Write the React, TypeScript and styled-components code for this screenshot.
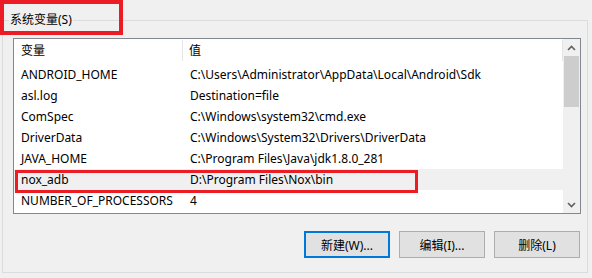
import * as React from "react";
import styled, { createGlobalStyle } from "styled-components";

const GlobalStyle = createGlobalStyle`
  html, body {
    margin: 0;
    padding: 0;
    background: #f0f0f0;
  }
  body {
    font-family: "Noto Sans", "Noto Sans CJK SC", sans-serif;
    font-size: 12px;
    color: #000;
  }
`;

const Page = styled.div`
  position: relative;
  width: 592px;
  height: 278px;
  padding-top: 20px;
  box-sizing: border-box;
  overflow: hidden;
`;

const Group = styled.div`
  margin-left: 2px;
  width: 586px;
  height: 253px;
  box-sizing: border-box;
  border: 1px solid #dcdcdc;
`;

const GroupTitle = styled.div`
  display: inline-block;
  margin: -10px 0 0 6px;
  padding: 0 1px;
  height: 18px;
  line-height: 18px;
  background: #f0f0f0;
  vertical-align: top;
`;

const ListBox = styled.div`
  display: flex;
  margin: 0 0 0 10px;
  width: 568px;
  height: 176px;
  box-sizing: border-box;
  border: 1px solid #828790;
  background: #fff;
`;

const ListBody = styled.div`
  flex: 1;
  display: flex;
  flex-direction: column;
`;

const HeaderRow = styled.div`
  display: flex;
  height: 25px;
  align-items: stretch;
`;

const HeaderCell = styled.div<{ $w?: number }>`
  display: flex;
  align-items: center;
  box-sizing: border-box;
  width: ${(p) => (p.$w ? `${p.$w}px` : "auto")};
  flex: ${(p) => (p.$w ? "none" : "1")};
  padding-left: ${(p) => (p.$w ? 7 : 6)}px;
  padding-bottom: 2px;
  border-right: 1px solid #e5e5e5;
  margin: 1px 0 3px;
`;

const Row = styled.div<{ $selected?: boolean }>`
  display: flex;
  height: 21px;
  align-items: center;
  background: ${(p) => (p.$selected ? "#f0f0f0" : "transparent")};
  white-space: nowrap;
`;

const Cell = styled.div<{ $w?: number }>`
  box-sizing: border-box;
  width: ${(p) => (p.$w ? `${p.$w}px` : "auto")};
  flex: ${(p) => (p.$w ? "none" : "1")};
  padding-left: ${(p) => (p.$w ? 7 : 7)}px;
  overflow: hidden;
`;

const ScrollBar = styled.div`
  width: 17px;
  display: flex;
  flex-direction: column;
  background: #f0f0f0;
`;

const ArrowBtn = styled.div`
  height: 17px;
  display: flex;
  align-items: center;
  justify-content: center;
`;

const Track = styled.div`
  flex: 1;
  padding: 0 1px;
`;

const Thumb = styled.div`
  height: 51px;
  background: #cdcdcd;
`;

const ButtonRow = styled.div`
  display: flex;
  justify-content: flex-end;
  gap: 9px;
  margin: 17px 7px 0 0;
`;

const Button = styled.div<{ $default?: boolean }>`
  width: 86px;
  height: 27px;
  box-sizing: border-box;
  display: flex;
  align-items: center;
  justify-content: center;
  background: #e1e1e1;
  border: ${(p) => (p.$default ? "2px solid #0078d7" : "1px solid #adadad")};
`;

const Mark = styled.div`
  position: absolute;
  box-sizing: border-box;
  border: 3px solid #ec1c24;
  pointer-events: none;
`;

const Chevron = ({ up }: { up?: boolean }) => (
  <svg width="9" height="6" viewBox="0 0 9 6">
    <path
      d={up ? "M1 5 L4.5 1.5 L8 5" : "M1 1 L4.5 4.5 L8 1"}
      fill="none"
      stroke="#606060"
      strokeWidth="1.6"
    />
  </svg>
);

const rows = [
  ["ANDROID_HOME", "C:\\Users\\Administrator\\AppData\\Local\\Android\\Sdk"],
  ["asl.log", "Destination=file"],
  ["ComSpec", "C:\\Windows\\system32\\cmd.exe"],
  ["DriverData", "C:\\Windows\\System32\\Drivers\\DriverData"],
  ["JAVA_HOME", "C:\\Program Files\\Java\\jdk1.8.0_281"],
  ["nox_adb", "D:\\Program Files\\Nox\\bin"],
  ["NUMBER_OF_PROCESSORS", "4"],
];

const App = () => {
  return (
    <Page>
      <GlobalStyle />
      <Group>
        <GroupTitle>系统变量(S)</GroupTitle>
        <ListBox>
          <ListBody>
            <HeaderRow>
              <HeaderCell $w={169}>变量</HeaderCell>
              <HeaderCell>值</HeaderCell>
            </HeaderRow>
            {rows.map(([name, value]) => (
              <Row key={name} $selected={name === "nox_adb"}>
                <Cell $w={169}>{name}</Cell>
                <Cell>{value}</Cell>
              </Row>
            ))}
          </ListBody>
          <ScrollBar>
            <ArrowBtn>
              <Chevron up />
            </ArrowBtn>
            <Track>
              <Thumb />
            </Track>
            <ArrowBtn>
              <Chevron />
            </ArrowBtn>
          </ScrollBar>
        </ListBox>
        <ButtonRow>
          <Button $default>新建(W)...</Button>
          <Button>编辑(I)...</Button>
          <Button>删除(L)</Button>
        </ButtonRow>
      </Group>
      <Mark style={{ left: 0, top: 0, width: 123, height: 35, borderWidth: 4 }} />
      <Mark style={{ left: 15, top: 170, width: 403, height: 23 }} />
    </Page>
  );
};

export default App;
